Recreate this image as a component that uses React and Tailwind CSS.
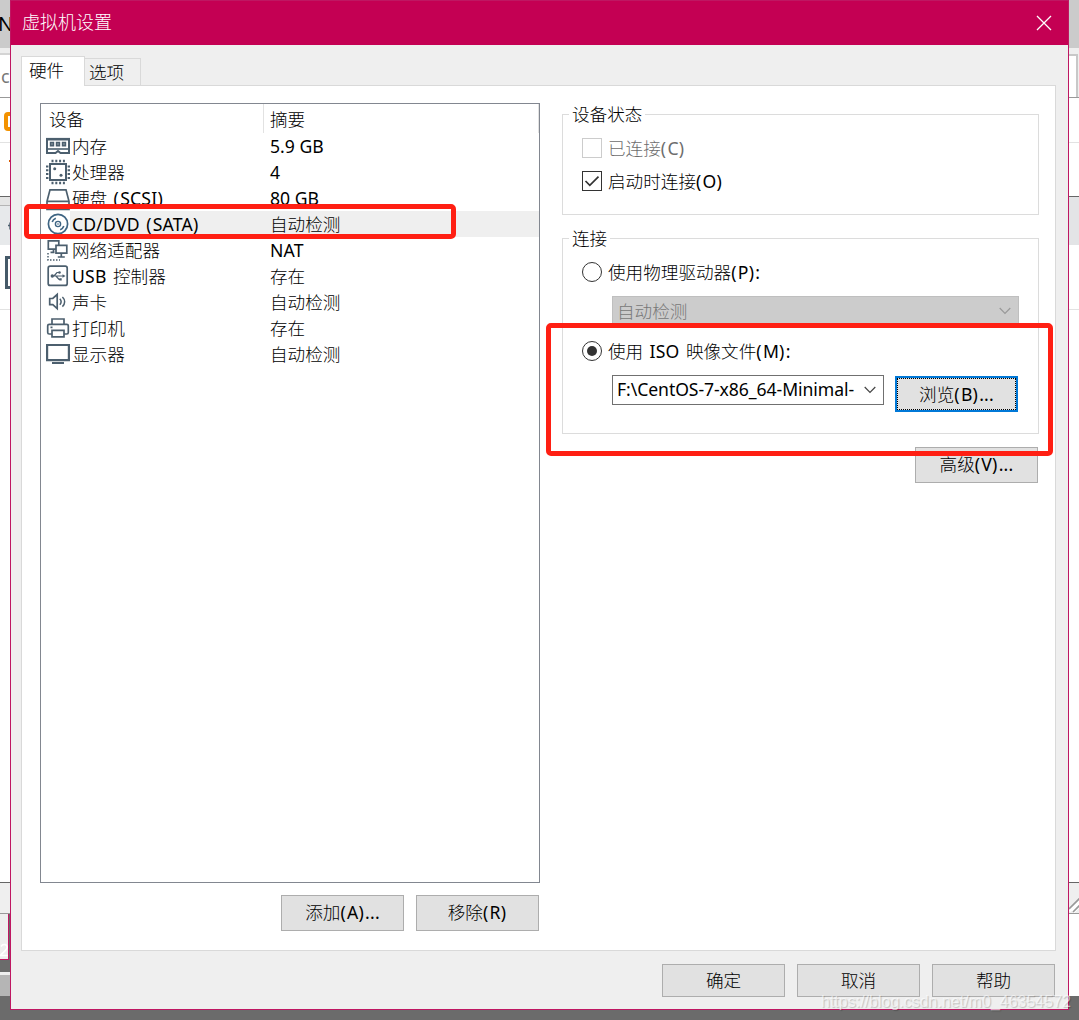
import React from "react";

const S = "#4c5f6e";

// Splits a label into CJK, punctuation and Latin runs so each gets its own weight and tracking.
function T({ children }) {
  const runs = children.match(/[\u4e00-\u9fff]+|[():]+|[^\u4e00-\u9fff():]+/g) || [];
  return (
    <span className="whitespace-pre">
      {runs.map((run, i) => {
        if (/[\u4e00-\u9fff]/.test(run)) return <span key={i} className="font-light">{run}</span>;
        if (/[():]/.test(run)) return <span key={i} className="tracking-[1.3px]">{run}</span>;
        return <span key={i} className="tracking-[0.2px] [word-spacing:1.6px]">{run}</span>;
      })}
    </span>
  );
}

function Icon({ children }) {
  return (
    <svg width="24" height="26" viewBox="0 0 24 26" fill="none" stroke={S} strokeWidth="1.7" className="block shrink-0">
      {children}
    </svg>
  );
}

const icons = {
  memory: (
    <Icon>
      <path d="M1 6v14h8.5l2.5-2 2.5 2H23V6" fill="#fff" strokeWidth="2" />
      <path d="M0 16h24" strokeWidth="1.6" />
      <path d="M0 6.2h24" strokeWidth="2.6" />
      <path d="M4.7 9.7h2.6v2.8H4.7zM10.7 9.7h2.6v2.8h-2.6zM16.7 9.7h2.6v2.8h-2.6z" strokeWidth="1.8" />
    </Icon>
  ),
  cpu: (
    <Icon>
      <rect x="4" y="5" width="16" height="16" strokeWidth="2" />
      <path d="M5.5 2h14M5.5 24h14" strokeWidth="2.4" strokeDasharray="2 1.8" />
      <path d="M1.2 6.5v14M22.8 6.5v14" strokeWidth="2.4" strokeDasharray="2 1.8" />
      <circle cx="8.7" cy="9.7" r="1.5" fill={S} stroke="none" />
      <circle cx="15" cy="16.3" r="1.5" fill={S} stroke="none" />
    </Icon>
  ),
  disk: (
    <Icon>
      <path d="M4 4.8h16l3 11.5v8H1v-8zM1 16.3h22" />
      <path d="M17 20.5h3" />
    </Icon>
  ),
  cd: (
    <Icon>
      <g stroke="#3f6583">
        <circle cx="12" cy="13" r="9.6" fill="#fff" />
        <circle cx="12" cy="13" r="2.6" strokeWidth="1.4" />
        <circle cx="12" cy="13" r=".8" fill="#3f6583" stroke="none" />
        <path d="M6.2 11a6 6 0 0 1 3.6-3.8M17.8 15a6 6 0 0 1-3.6 3.8" strokeWidth="1.6" />
      </g>
    </Icon>
  ),
  net: (
    <Icon>
      <path d="M2.3 3.8h10.5v8.4H2.3zM7.5 12.2v3M4.5 15.3h4" />
      <path d="M10 8.3h10.8v7.8H10z" fill="#fff" />
      <path d="M15.3 16.1v4M11.8 20h7" />
      <path d="M2 16v7h12" strokeWidth="1.5" strokeDasharray="1.5 1.5" />
    </Icon>
  ),
  usb: (
    <Icon>
      <rect x="2.2" y="3.2" width="19" height="19.2" rx="2" />
      <path d="M5 13h12M8 13l3-3.5h2.2M10 13l3 3.5h1" strokeWidth="1.2" />
      <path d="M16.5 11.2l3 1.8-3 1.8z" fill={S} stroke="none" />
      <circle cx="6.3" cy="13" r="1.7" fill={S} stroke="none" />
      <circle cx="13.5" cy="9.5" r="1.3" fill={S} stroke="none" />
      <path d="M13.3 15.2h2.4v2.4h-2.4z" fill={S} stroke="none" />
    </Icon>
  ),
  sound: (
    <Icon>
      <path d="M3.7 9.5h3.1l4.4-4v14.2l-4.4-4H3.7z" />
      <path d="M13.8 9.8c1.6 1.8 1.6 4.2 0 6M16.4 8c3 2.8 3 6.8 0 9.6" strokeWidth="1.5" />
    </Icon>
  ),
  printer: (
    <Icon>
      <path d="M6 9V4h12v5M6 19H3.2a1.5 1.5 0 0 1-1.5-1.5v-6.7A1.5 1.5 0 0 1 3.2 9.3h17.6a1.5 1.5 0 0 1 1.5 1.5v6.7a1.5 1.5 0 0 1-1.5 1.5H18" />
      <path d="M6 15.3h12v6.6H6zM4.5 12.3h2" />
    </Icon>
  ),
  monitor: (
    <Icon>
      <path d="M1.1 4h21.8v15.2H1.1z" strokeWidth="2.2" />
      <path d="M6 22h12" strokeWidth="2" />
    </Icon>
  ),
};

const devices = [
  ["memory", "内存", "5.9 GB"],
  ["cpu", "处理器", "4"],
  ["disk", "硬盘 (SCSI)", "80 GB"],
  ["cd", "CD/DVD (SATA)", "自动检测"],
  ["net", "网络适配器", "NAT"],
  ["usb", "USB 控制器", "存在"],
  ["sound", "声卡", "自动检测"],
  ["printer", "打印机", "存在"],
  ["monitor", "显示器", "自动检测"],
];

function Button({ children, className = "h-[36px]" }) {
  return (
    <button className={`flex w-[123px] items-center justify-center border border-[#adadad] bg-[#e1e1e1] leading-none ${className}`}>
      <T>{children}</T>
    </button>
  );
}

function Chevron({ color }) {
  return (
    <svg width="12" height="8" viewBox="0 0 12 8" fill="none" stroke={color} strokeWidth="1.2" className="shrink-0">
      <path d="M.7 1l5.3 5.3L11.3 1" />
    </svg>
  );
}

function LeftBackdrop() {
  return (
    <div className="flex w-[10px] shrink-0 flex-col overflow-hidden bg-white">
      <div className="flex h-12 shrink-0 items-center bg-[#cbcbcb] font-['Noto_Sans'] text-[20px] leading-none"><span className="-ml-[2px]">N</span></div>
      <div className="h-[5px] shrink-0 bg-[#eeeeee]" />
      <div className="h-[2px] shrink-0 bg-[#d4d4d4]" />
      <div className="flex h-[43px] shrink-0 items-center border-b border-[#999] pl-px font-['Noto_Sans'] text-[18px] leading-none text-[#777]">c</div>
      <div className="h-[45px] shrink-0 border-b border-[#e2e2e2] pl-1 pt-[14px]">
        <div className="h-[19px] w-[14px] rounded-[4px] border-4 border-[#f39200]" />
      </div>
      <div className="flex h-[54px] shrink-0 justify-end border-b border-[#666] pt-[17px]">
        <div className="h-[2px] w-px bg-[#d95a00]" />
      </div>
      <div className="h-[9px] shrink-0 border-b border-[#b5b5b5] bg-[#e5e5e5]" />
      <div className="h-[39px] shrink-0 bg-[#e7e9eb] pl-2 pt-4">
        <svg width="6" height="10" viewBox="0 0 6 10" fill="none" stroke={S} strokeWidth="1.4"><path d="M0 3.5h4M2 .5v7" /></svg>
      </div>
      <div className="h-[65px] shrink-0 border-b border-[#e2e2e2] pl-[5px] pt-[11px]">
        <div className="h-[33px] w-5 border-[3px] border-[#465a69]" />
      </div>
      <div className="h-[573px] shrink-0 border-b border-[#666]" />
      <div className="h-[31px] shrink-0 border-b border-[#999] bg-[#efefef]" />
      <div className="flex h-[46px] shrink-0 bg-[#6b6b6b]">
        <div className="h-full w-[9px] border-b border-r border-[#bf1762] bg-[#eee] pt-[29px]">
          <svg width="8" height="14" viewBox="0 0 8 14" fill="none" stroke="#fff" strokeWidth="1.6"><path d="M1 3.5c2-3.5 7-2 6 1.500C6.300 8 2 9.500.5 12.500H8" /></svg>
        </div>
      </div>
      <div className="h-[12px] shrink-0 bg-[#6b6b6b]" />
      <div className="h-[3px] shrink-0 bg-[#eee]" />
      <div className="h-[21px] shrink-0 bg-[#b5b5b5]" />
      <div className="grow bg-[#6b6b6b]" />
    </div>
  );
}

function RightBackdrop() {
  return (
    <div className="flex w-[10px] shrink-0 flex-col overflow-hidden bg-white">
      <div className="h-12 shrink-0 bg-[#cbcbcb]" />
      <div className="h-[6px] shrink-0 bg-[#efefef]" />
      <div className="flex h-[44px] shrink-0 border-b border-[#999] bg-[#efefef]">
        <div className="w-[9px] border-r-2 border-t-2 border-[#c8c8c8] bg-white" />
      </div>
      <div className="h-[45px] shrink-0 border-b border-[#e2e2e2]" />
      <div className="h-[54px] shrink-0 border-b border-[#666]" />
      <div className="h-12 shrink-0 bg-[#e3e4e6]" />
      <div className="h-[65px] shrink-0 border-b border-[#e2e2e2]" />
      <div className="h-[573px] shrink-0 border-b border-[#666]" />
      <div className="h-[31px] shrink-0 border-b border-[#999] bg-[#efefef]">
        <svg width="10" height="30" viewBox="0 0 10 30" stroke="#999" strokeWidth="1.6" fill="none">
          <path d="M0 28L14 14M4 29L14 19" stroke="#fff" strokeWidth="3.5" />
          <path d="M0 26L14 12M4 29L14 19" />
        </svg>
      </div>
      <div className="h-[82px] shrink-0" />
      <div className="grow bg-[#6b6b6b]" />
    </div>
  );
}

function DeviceList() {
  return (
    <div className="flex h-[780px] w-[500px] flex-col border border-[#828790] bg-white">
      <div className="flex h-[29px] items-center">
        <div className="w-[222px] pl-2 pt-[2px]"><T>设备</T></div>
        <div className="flex h-[29px] grow items-center border-x border-[#e2e2e2] pl-[6px] pt-[2px]"><T>摘要</T></div>
      </div>
      {devices.map(([icon, name, summary]) => (
        <div key={name} className="flex h-[26px] items-center pl-[5px] leading-[26px]">
          {icons[icon]}
          <div className={`flex h-full grow ${icon === "cd" ? "bg-[#efefef]" : ""}`}>
            <div className="w-[200px] pl-[2px]"><T>{name}</T></div>
            <div className="whitespace-pre">{/\d/.test(summary) ? summary : <T>{summary}</T>}</div>
          </div>
        </div>
      ))}
    </div>
  );
}

function Group({ title, className, children }) {
  return (
    <section className={`w-[477px] border border-[#dcdcdc] ${className}`}>
      <div className="ml-[6px] -mt-[13px] w-fit bg-white px-[3px] leading-6"><T>{title}</T></div>
      {children}
    </section>
  );
}

function Radio({ checked }) {
  return (
    <span className="flex size-5 shrink-0 items-center justify-center rounded-full border border-[#333] bg-white">
      {checked && <span className="size-[10px] rounded-full bg-[#333]" />}
    </span>
  );
}

export default function App() {
  return (
    <div className="relative flex h-[1020px] w-[1079px] overflow-hidden bg-[#6b6b6b] font-['Noto_Sans','Noto_Sans_CJK_SC',sans-serif] text-[17.6px] text-black">
      <LeftBackdrop />
      <main className="flex h-[1010px] w-[1059px] shrink-0 flex-col border border-[#bf1762] bg-[#efefef]">
        <header className="flex h-11 shrink-0 items-center justify-between bg-[#c40053] pl-[11px] pr-4 text-[18px] text-white">
          <span className="-mt-[2px]"><T>虚拟机设置</T></span>
          <svg width="16" height="16" viewBox="0 0 16 16" fill="none" stroke="#fff" strokeWidth="1.3">
            <path d="M1 1l14 14M15 1L1 15" />
          </svg>
        </header>
        <div className="flex h-10 shrink-0 items-end pl-[10px]">
          <div className="z-10 -mb-px h-[30px] w-[64px] border border-b-0 border-[#d9d9d9] bg-white pl-[7px] leading-[26px]"><T>硬件</T></div>
          <div className="h-[27px] w-[56px] border border-b-0 border-l-0 border-[#d9d9d9] pl-1 leading-[26px]"><T>选项</T></div>
        </div>
        <div className="ml-[10px] flex h-[866px] w-[1035px] shrink-0 border border-[#d9d9d9] bg-white pl-[18px] pt-[17px]">
          <div className="w-[500px] shrink-0">
            <DeviceList />
            <div className="mt-3 flex justify-end gap-3 pr-px">
              <Button>添加(A)...</Button>
              <Button>移除(R)</Button>
            </div>
          </div>
          <div className="ml-[22px] w-[477px] pt-[11px]">
            <Group title="设备状态" className="h-[101px]">
              <label className="ml-[19px] mt-[10px] flex h-6 items-center gap-[6px] text-[#6d6d6d]">
                <span className="size-5 border border-[#ccc]" />
                <T>已连接(C)</T>
              </label>
              <label className="ml-[19px] mt-[9px] flex h-6 items-center gap-[6px]">
                <span className="flex size-5 items-center justify-center border border-[#333]">
                  <svg width="16" height="14" viewBox="0 0 16 14" fill="none" stroke="#333" strokeWidth="1.7"><path d="M1.5 7l4.3 4.3L14.5 2.6" /></svg>
                </span>
                <T>启动时连接(O)</T>
              </label>
            </Group>
            <Group title="连接" className="mt-[23px] h-[196px]">
              <label className="ml-[19px] mt-[10px] flex h-6 items-center gap-[6px]">
                <Radio />
                <T>使用物理驱动器(P):</T>
              </label>
              <div className="ml-[49px] mt-[12px] flex h-[30px] w-[407px] items-center justify-between border border-[#bfbfbf] bg-[#ccc] pl-1 pr-[7px] text-[#787878]">
                <T>自动检测</T>
                <Chevron color="#999" />
              </div>
              <label className="ml-[19px] mt-[13px] flex h-6 items-center gap-[6px]">
                <Radio checked />
                <T>使用 ISO 映像文件(M):</T>
              </label>
              <div className="ml-[49px] mt-[12px] flex gap-[11px]">
                <div className="flex h-[30px] w-[272px] items-center justify-between border border-[#707070] bg-white pl-1 pr-[7px]">
                  <span className="-mt-[2px] whitespace-nowrap tracking-[-0.07px]">F:\CentOS-7-x86_64-Minimal-</span>
                  <Chevron color="#444" />
                </div>
                <button className="mt-px h-[36px] w-[123px] border-2 border-[#0078d7] bg-[#e1e1e1]">
                  <span className="flex h-full items-center justify-center border border-dotted border-black"><T>浏览(B)...</T></span>
                </button>
              </div>
            </Group>
            <div className="mt-[13px] flex justify-end pr-px"><Button>高级(V)...</Button></div>
          </div>
        </div>
        <footer className="flex justify-end gap-3 pr-[13px] pt-[13px]">
          <Button className="h-[33px]">确定</Button>
          <Button className="h-[33px]">取消</Button>
          <Button className="h-[33px]">帮助</Button>
        </footer>
      </main>
      <RightBackdrop />
      <div className="absolute left-[24px] top-[204px] h-[35px] w-[432px] rounded-[5px] border-[5px] border-[#ff1f13]" />
      <div className="absolute left-[546px] top-[323px] h-[133px] w-[507px] rounded-[5px] border-[5px] border-[#ff1f13]" />
      <div className="absolute left-[821px] top-[992px] whitespace-nowrap font-['Liberation_Sans'] text-[16px] leading-5 text-white/60 [text-shadow:1px_1px_1px_rgba(0,0,0,0.2)]">https://blog.csdn.net/m0_46354572</div>
    </div>
  );
}
